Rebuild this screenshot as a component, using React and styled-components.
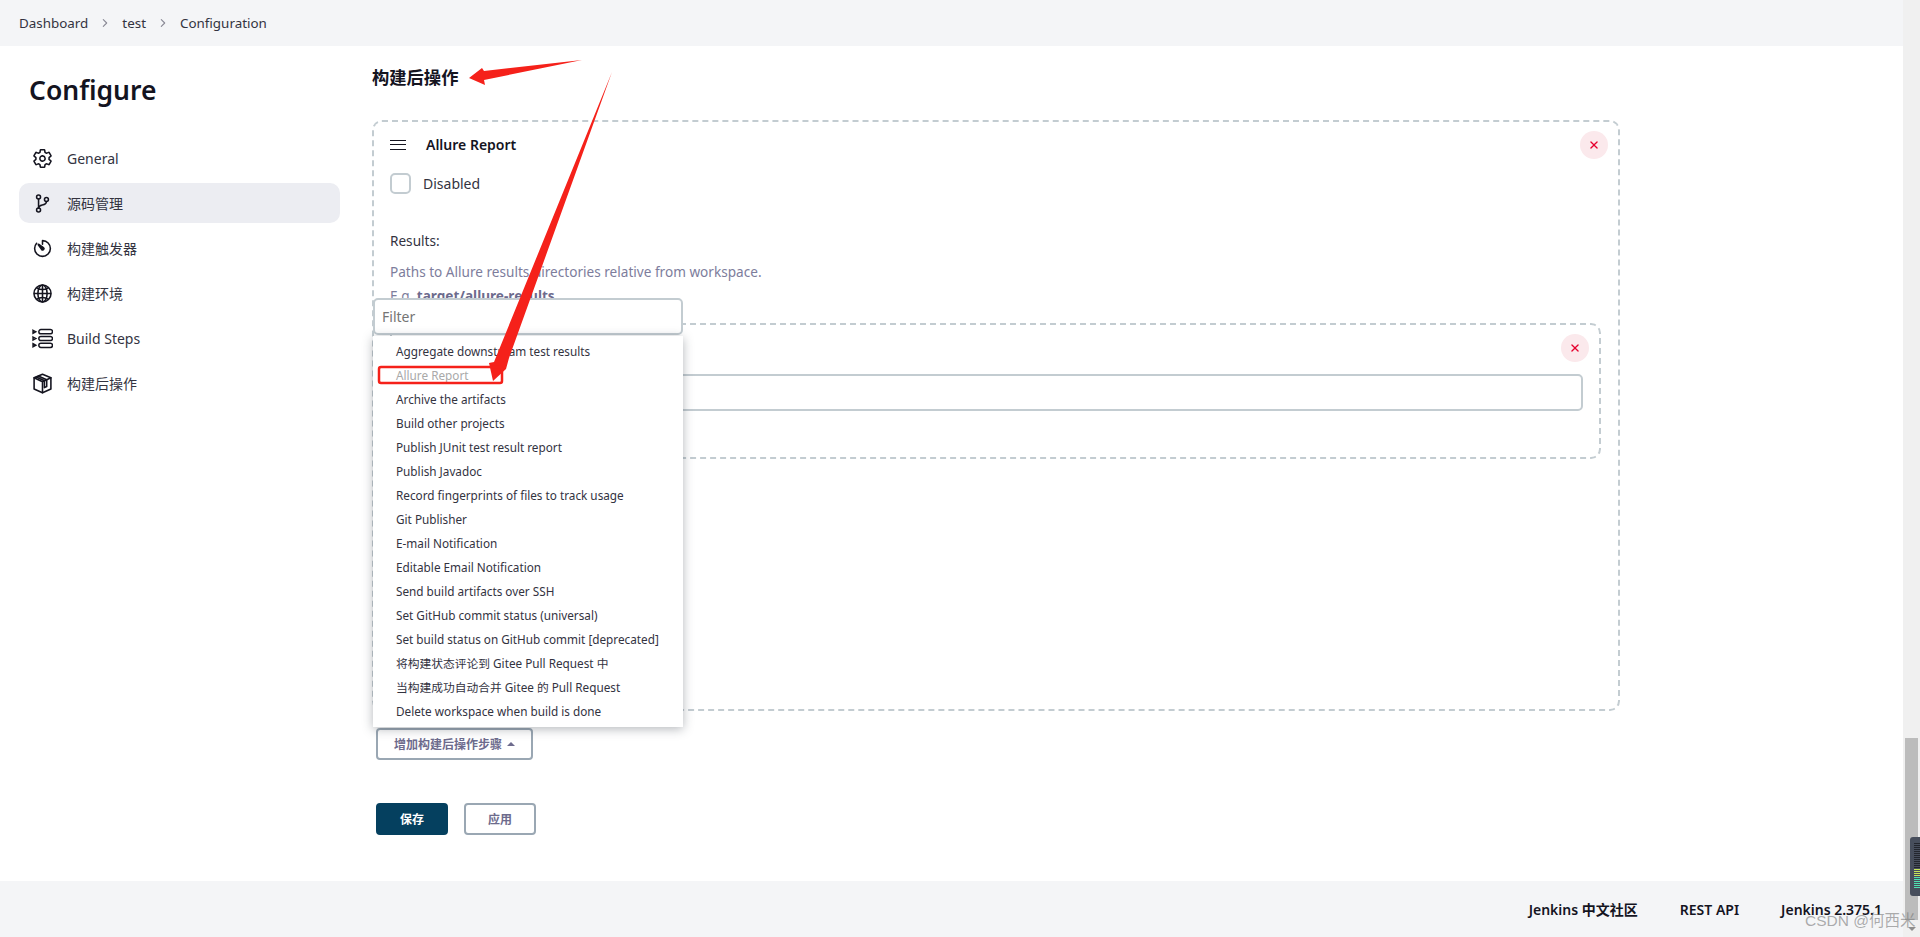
import React from "react";
import styled, { createGlobalStyle } from "styled-components";
import {
  IoSettingsOutline,
  IoGitBranchOutline,
  IoTimerOutline,
  IoGlobeOutline,
  IoChevronForward,
  IoClose,
} from "react-icons/io5";

const sans = `"Noto Sans", "Noto Sans CJK SC", sans-serif`;

const GlobalStyle = createGlobalStyle`
  html, body {
    margin: 0;
    height: 100%;
    overflow: hidden;
    background: #fff;
    font-family: ${sans};
    color: #14141f;
  }
`;

const Page = styled.div`
  position: relative;
  display: flex;
  width: 1920px;
  height: 937px;
  overflow: hidden;
`;

const Column = styled.div`
  flex: 1;
  min-width: 0;
  display: flex;
  flex-direction: column;
`;

const Crumbs = styled.nav`
  height: 46px;
  flex: none;
  display: flex;
  align-items: center;
  padding-left: 19px;
  background: #f4f5f7;
  font-size: 13.4px;
  color: #33333f;
`;

const Chevron = styled(IoChevronForward)`
  width: 12px;
  height: 12px;
  margin: 0 11px 0 11px;
  color: #8a8a96;
`;

const Body = styled.div`
  flex: 1;
  min-height: 0;
  display: flex;
`;

const Sidebar = styled.aside`
  width: 353px;
  flex: none;
  box-sizing: content-box;
  padding-left: 19px;
`;

const Title = styled.h1`
  margin: 29px 0 33px 10px;
  font-size: 26.5px;
  line-height: 30px;
  font-weight: 600;
`;

const NavList = styled.div`
  width: 321px;
  display: flex;
  flex-direction: column;
  gap: 5px;
`;

const NavItem = styled.div`
  height: 40px;
  display: flex;
  align-items: center;
  gap: 14px;
  padding-left: 13px;
  border-radius: 10px;
  font-size: 14px;
  color: #33333f;
  background: ${(p) => (p.$active ? "#ecedf2" : "transparent")};

  svg {
    width: 21px;
    height: 21px;
    flex: none;
    color: #14141f;
  }
  svg.ion * {
    stroke-width: 38;
  }
`;

const Main = styled.main`
  flex: 1;
  min-width: 0;
`;

const Heading = styled.h2`
  margin: 20px 0 0;
  font-size: 17.3px;
  line-height: 24px;
  font-weight: 600;
`;

const DashedCard = styled.section`
  position: relative;
  box-sizing: border-box;
  border: 2px dashed #c3ccd1;
  border-radius: 10px;
`;

const OuterCard = styled(DashedCard)`
  width: 1248px;
  height: 591px;
  margin-top: 30px;
  padding: 0 16px;
`;

const InnerCard = styled(DashedCard)`
  width: 1211px;
  height: 136px;
  margin-top: 15px;
  padding: 49px 16px 0 16px;
`;

const CloseButton = styled.button`
  position: absolute;
  top: 9px;
  right: 10px;
  width: 28px;
  height: 28px;
  padding: 0;
  display: flex;
  align-items: center;
  justify-content: center;
  border: none;
  border-radius: 50%;
  background: #fbe9ec;
  color: #e6002e;

  svg {
    width: 14px;
    height: 14px;
  }
`;

const CardHeader = styled.div`
  height: 22px;
  margin-top: 11px;
  display: flex;
  align-items: center;
  gap: 20px;
  font-size: 14px;
  font-weight: 600;
`;

const DragHandle = styled.span`
  width: 16px;
  height: 8px;
  flex: none;
  margin-top: 2px;
  border-top: 1.5px solid #14141f;
  border-bottom: 1.5px solid #14141f;
  position: relative;

  &::after {
    content: "";
    position: absolute;
    left: 0;
    right: 0;
    top: 3px;
    border-top: 1.5px solid #14141f;
  }
`;

const CheckRow = styled.label`
  margin-top: 17px;
  height: 22px;
  display: flex;
  align-items: center;
  gap: 12px;
  font-size: 14px;
  color: #33333f;
`;

const CheckBox = styled.span`
  width: 17px;
  height: 17px;
  flex: none;
  border: 2px solid #c3ccd1;
  border-radius: 5px;
`;

const FieldLabel = styled.div`
  margin-top: 37px;
  font-size: 13.6px;
  line-height: 20px;
  color: #33333f;
`;

const Help = styled.div`
  margin-top: 9px;
  font-size: 13.6px;
  line-height: 24px;
  color: #7d7d9c;

  b {
    font-weight: 700;
    color: #6d6b8d;
  }
`;

const TextInput = styled.div`
  height: 37px;
  box-sizing: border-box;
  border: 2px solid #c3ccd1;
  border-radius: 5px;
  background: #fff;
`;

const AddAnchor = styled.div`
  position: relative;
  width: fit-content;
  margin: 17px 0 0 4px;
`;

const FilterPopup = styled.div`
  position: absolute;
  left: -3px;
  bottom: 33px;
  width: 310px;
`;

const FilterInput = styled(TextInput)`
  display: flex;
  align-items: center;
  padding-left: 7px;
  font-size: 14px;
  color: #757575;
  margin-bottom: 1px;
`;

const Menu = styled.ul`
  list-style: none;
  margin: 0;
  padding: 3px 0 4px;
  background: #fff;
  box-shadow: 0 2px 10px rgba(40, 50, 60, 0.35);
`;

const MenuItem = styled.li`
  height: 24px;
  line-height: 24px;
  padding-left: 23px;
  font-size: 11.75px;
  white-space: nowrap;
  color: ${(p) => (p.$disabled ? "#a9a9a9" : "#33333f")};
`;

const OutlineButton = styled.button`
  height: 32px;
  box-sizing: border-box;
  display: flex;
  align-items: center;
  justify-content: center;
  gap: 5px;
  padding: 0;
  border: 2px solid #9aa7b3;
  border-radius: 4px;
  background: #fff;
  font-family: ${sans};
  font-size: 12px;
  font-weight: 600;
  color: #6d6b8d;
`;

const AddButton = styled(OutlineButton)`
  width: 157px;
`;

const Caret = styled.span`
  width: 0;
  height: 0;
  border-left: 4px solid transparent;
  border-right: 4px solid transparent;
  border-bottom: 4px solid #6d6b8d;
`;

const ActionRow = styled.div`
  margin: 43px 0 0 4px;
  display: flex;
  gap: 16px;
`;

const ActionButton = styled(OutlineButton)`
  width: 72px;
`;

const SaveButton = styled(ActionButton)`
  border-color: #05405f;
  background: #05405f;
  color: #fff;
  font-weight: 700;
`;

const Footer = styled.footer`
  height: 56px;
  flex: none;
  display: flex;
  align-items: center;
  justify-content: flex-end;
  gap: 42px;
  padding-right: 21px;
  background: #f4f5f7;
  font-size: 14px;
  font-weight: 600;
`;

const ScrollTrack = styled.div`
  position: relative;
  width: 17px;
  flex: none;
  display: flex;
  flex-direction: column;
  justify-content: flex-end;
  align-items: center;
  background: #f0f0f0;
`;

const ScrollThumb = styled.div`
  width: 13px;
  height: 182px;
  background: #bcbcbc;
`;

const ScrollArrow = styled.div`
  height: 17px;
  display: flex;
  align-items: center;

  &::before {
    content: "";
    border-left: 4px solid transparent;
    border-right: 4px solid transparent;
    border-top: 4px solid #8f8f8f;
  }
`;

const Meter = styled.svg`
  position: absolute;
  top: 837px;
  right: 0;
`;

const Watermark = styled.div`
  position: absolute;
  left: 1805px;
  top: 910px;
  font-family: "Liberation Sans", "Noto Sans CJK SC", sans-serif;
  font-size: 15.5px;
  line-height: 22px;
  color: rgba(120, 120, 120, 0.6);
  white-space: nowrap;
`;

const Annotations = styled.svg`
  position: absolute;
  left: 0;
  top: 0;
  pointer-events: none;
`;

const BuildStepsIcon = () => (
  <svg viewBox="0 0 20 20" fill="none" stroke="currentColor" strokeWidth="1.4">
    <path d="M1 2.2l2.6 1.4L1 5zM1 8.6L3.6 10 1 11.4zM1 15l2.6 1.4L1 17.8z" />
    <rect x="6.5" y="1.5" width="13" height="4" rx="2" />
    <rect x="6.5" y="8" width="13" height="4" rx="2" />
    <rect x="6.5" y="14.5" width="13" height="4" rx="2" />
  </svg>
);

const PackageIcon = () => (
  <svg
    viewBox="0 0 20 20"
    fill="none"
    stroke="currentColor"
    strokeWidth="1.5"
    strokeLinejoin="round"
    strokeLinecap="round"
  >
    <path d="M10 1.2l8 3.4v10.6l-8 3.6-8-3.6V4.6z" />
    <path d="M2 4.6l8 3.8 8-3.8M10 8.4v10.4" />
    <path d="M6 2.9l8 3.6v6.4l-2.2 1V7.4L4 3.8" />
  </svg>
);

const navItems = [
  { label: "General", icon: <IoSettingsOutline className="ion" /> },
  { label: "源码管理", icon: <IoGitBranchOutline className="ion" />, active: true },
  { label: "构建触发器", icon: <IoTimerOutline className="ion" /> },
  { label: "构建环境", icon: <IoGlobeOutline className="ion" /> },
  { label: "Build Steps", icon: <BuildStepsIcon /> },
  { label: "构建后操作", icon: <PackageIcon /> },
];

const menuItems = [
  "Aggregate downstream test results",
  "Allure Report",
  "Archive the artifacts",
  "Build other projects",
  "Publish JUnit test result report",
  "Publish Javadoc",
  "Record fingerprints of files to track usage",
  "Git Publisher",
  "E-mail Notification",
  "Editable Email Notification",
  "Send build artifacts over SSH",
  "Set GitHub commit status (universal)",
  "Set build status on GitHub commit [deprecated]",
  "将构建状态评论到 Gitee Pull Request 中",
  "当构建成功自动合并 Gitee 的 Pull Request",
  "Delete workspace when build is done",
];

const meterColor = (i) => {
  if (i < 13) return "#23262e";
  if (i < 17) return "#c6e65a";
  return "#4fe0b0";
};

const App = () => {
  return (
    <Page>
      <GlobalStyle />
      <Column>
        <Crumbs>
          Dashboard
          <Chevron />
          test
          <Chevron />
          Configuration
        </Crumbs>
        <Body>
          <Sidebar>
            <Title>Configure</Title>
            <NavList>
              {navItems.map((item) => (
                <NavItem key={item.label} $active={item.active}>
                  {item.icon}
                  {item.label}
                </NavItem>
              ))}
            </NavList>
          </Sidebar>
          <Main>
            <Heading>构建后操作</Heading>
            <OuterCard>
              <CloseButton>
                <IoClose />
              </CloseButton>
              <CardHeader>
                <DragHandle />
                Allure Report
              </CardHeader>
              <CheckRow>
                <CheckBox />
                Disabled
              </CheckRow>
              <FieldLabel>Results:</FieldLabel>
              <Help>
                Paths to Allure results directories relative from workspace.
                <br />
                E.g. <b>target/allure-results</b>
              </Help>
              <InnerCard>
                <CloseButton>
                  <IoClose />
                </CloseButton>
                <TextInput />
              </InnerCard>
            </OuterCard>
            <AddAnchor>
              <FilterPopup>
                <FilterInput>Filter</FilterInput>
                <Menu>
                  {menuItems.map((label) => (
                    <MenuItem key={label} $disabled={label === "Allure Report"}>
                      {label}
                    </MenuItem>
                  ))}
                </Menu>
              </FilterPopup>
              <AddButton>
                增加构建后操作步骤
                <Caret />
              </AddButton>
            </AddAnchor>
            <ActionRow>
              <SaveButton>保存</SaveButton>
              <ActionButton>应用</ActionButton>
            </ActionRow>
          </Main>
        </Body>
        <Footer>
          <span>Jenkins 中文社区</span>
          <span>REST API</span>
          <span>Jenkins 2.375.1</span>
        </Footer>
      </Column>
      <ScrollTrack>
        <ScrollThumb />
        <ScrollArrow />
        <Meter width="10" height="59" viewBox="0 0 10 59">
          <rect x="0" y="0" width="14" height="59" rx="3" fill="#474e5c" />
          {Array.from({ length: 23 }, (_, i) => (
            <rect key={i} x="4" y={6 + i * 2} width="6" height="1" fill={meterColor(i)} />
          ))}
        </Meter>
      </ScrollTrack>
      <Annotations width="1920" height="937" viewBox="0 0 1920 937">
        <polygon points="582,60 484,71 482,68 469,78 485,85 484,80" fill="#f5211a" />
        <polygon points="612,72 509,358 506,369 493,381 489,363 494,362" fill="#f5211a" />
        <rect x="379" y="367" width="123" height="16" rx="2" fill="none" stroke="#f5211a" strokeWidth="2.5" />
      </Annotations>
      <Watermark>CSDN @何西米</Watermark>
    </Page>
  );
};

export default App;
